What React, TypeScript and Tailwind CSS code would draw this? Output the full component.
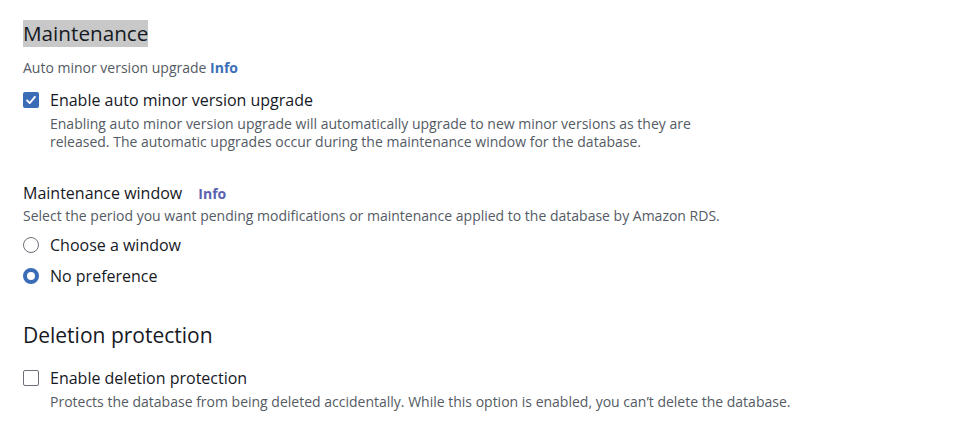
export default function App() {
  return (
    <div className="min-h-screen bg-white pl-[23px] pt-[20px] text-[#16191f]" style={{ fontFamily: '"Open Sans", Arial, sans-serif' }}>
      <h2 className="inline-block bg-[#c8c8c8] text-[20.7px] leading-[27px] font-normal">Maintenance</h2>

      <div className="mt-[12px] text-[14px] leading-[18px] text-[#545b64]">
        Auto minor version upgrade <span className="font-bold text-[#3c6fb8]">Info</span>
      </div>

      <div className="mt-[12px] flex gap-[11px]">
        <div className="mt-[3px] flex h-[16px] w-[16px] shrink-0 items-center justify-center rounded-[2px] bg-[#3a6db5]">
          <svg viewBox="0 0 16 16" className="h-[14px] w-[14px]" fill="none" stroke="white" strokeWidth="2.2" strokeLinecap="round" strokeLinejoin="round">
            <path d="M3.5 8.5l3 3 6-7" />
          </svg>
        </div>
        <div>
          <div className="text-[16px] leading-[22px]">Enable auto minor version upgrade</div>
          <div className="mt-[4px] text-[14px] leading-[18px] text-[#545b64]">
            Enabling auto minor version upgrade will automatically upgrade to new minor versions as they are
            <br />
            released. The automatic upgrades occur during the maintenance window for the database.
          </div>
        </div>
      </div>

      <div className="mt-[31px] text-[16px] leading-[22px]">
        Maintenance window <span className="ml-[12px] text-[14px] font-bold text-[#5a62b0]">Info</span>
      </div>
      <div className="mt-[2px] text-[14px] leading-[18px] text-[#545b64]">
        Select the period you want pending modifications or maintenance applied to the database by Amazon RDS.
      </div>

      <div className="mt-[9px] flex items-center gap-[11px]">
        <div className="h-[16px] w-[16px] rounded-full border-[1.5px] border-[#6b7079]" />
        <span className="text-[16px] leading-[22px]">Choose a window</span>
      </div>
      <div className="mt-[9px] flex items-center gap-[11px]">
        <div className="h-[16px] w-[16px] rounded-full border-[4.5px] border-[#3a6db5] bg-white" />
        <span className="text-[16px] leading-[22px]">No preference</span>
      </div>

      <h2 className="mt-[35px] text-[21px] leading-[27px] font-normal">Deletion protection</h2>

      <div className="mt-[18px] flex gap-[11px]">
        <div className="mt-[3px] h-[16px] w-[16px] shrink-0 rounded-[2px] border-[1.5px] border-[#6b7079]" />
        <div>
          <div className="text-[16px] leading-[22px]">Enable deletion protection</div>
          <div className="mt-[4px] text-[14px] leading-[18px] text-[#545b64]">
            Protects the database from being deleted accidentally. While this option is enabled, you can’t delete the database.
          </div>
        </div>
      </div>
    </div>
  );
}
